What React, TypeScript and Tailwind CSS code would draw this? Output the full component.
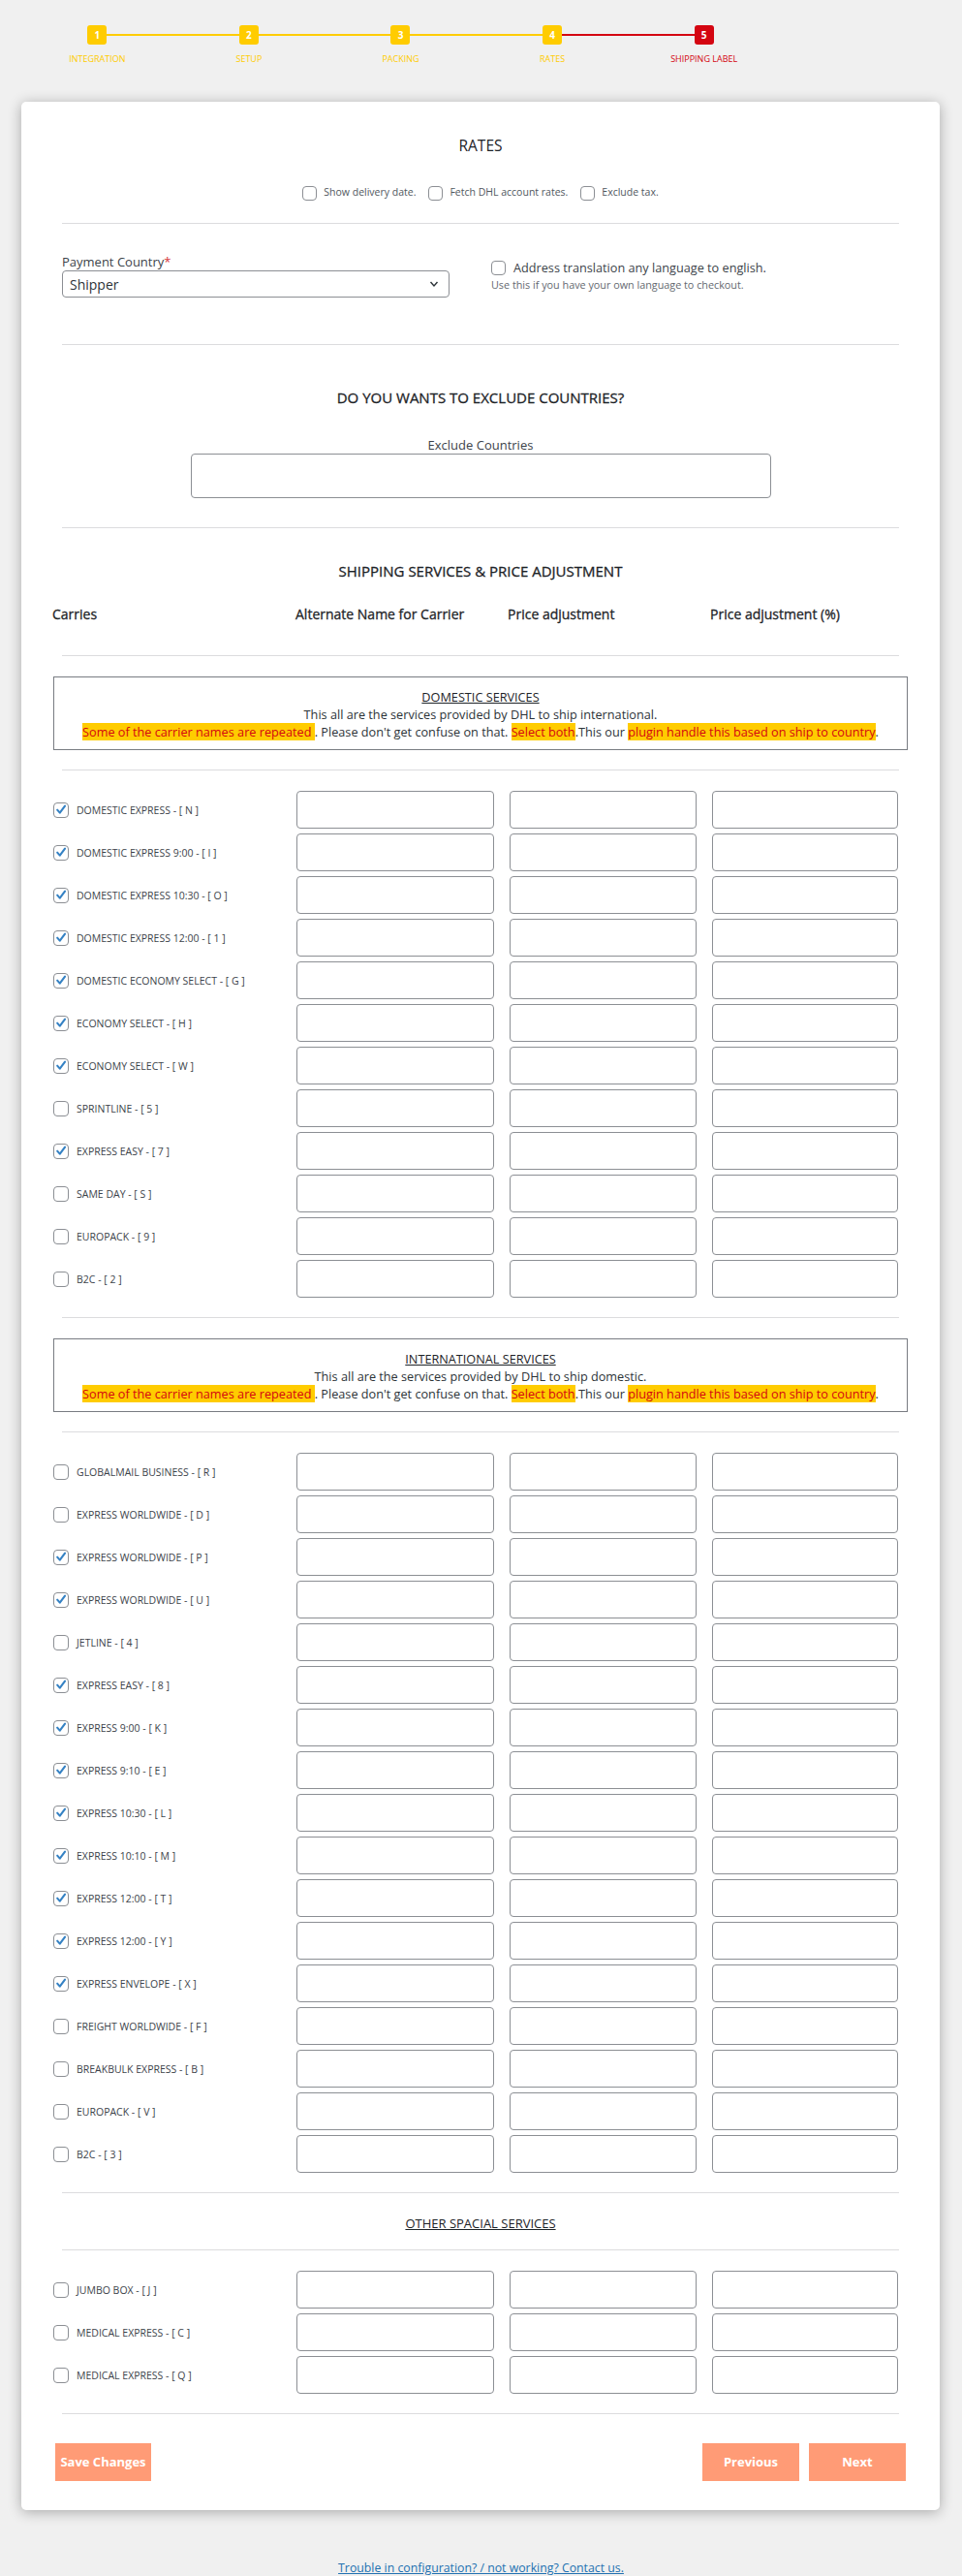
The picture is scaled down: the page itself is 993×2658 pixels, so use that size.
import React from "react";

const FONT = "font-['Open_Sans','Noto_Sans',sans-serif]";

function Box({ checked, size = 16 }: { checked?: boolean; size?: number }) {
  return (
    <span
      className={
        "relative inline-flex shrink-0 items-center justify-center rounded-[4px] border border-[#8c8f94] bg-white " +
        (size === 16 ? "h-[16px] w-[16px]" : "h-[15px] w-[15px]")
      }
    >
      {checked && (
        <svg viewBox="0 0 16 16" className="h-[15px] w-[15px]">
          <path
            d="M3.6 8.2 L6.6 11.6 L12.6 3.6"
            fill="none"
            stroke="#3582c4"
            strokeWidth="2.4"
            strokeLinecap="round"
            strokeLinejoin="round"
          />
        </svg>
      )}
    </span>
  );
}

const GRID = "grid grid-cols-[235px_204px_193px_192px] gap-x-4";

function Row({ label, checked }: { label: string; checked?: boolean }) {
  return (
    <div className={GRID + " h-[39px] items-center"}>
      <div className="flex items-center">
        <Box checked={checked} />
        <span className="ml-2 whitespace-nowrap text-[10.5px] leading-[16px] text-[#3c434a]">{label}</span>
      </div>
      <input type="text" className="h-[39px] w-full rounded-[4px] border border-[#8c8f94] bg-white" />
      <input type="text" className="h-[39px] w-full rounded-[4px] border border-[#8c8f94] bg-white" />
      <input type="text" className="h-[39px] w-full rounded-[4px] border border-[#8c8f94] bg-white" />
    </div>
  );
}

function Rows({ items }: { items: [string, boolean][] }) {
  return (
    <div className="flex flex-col gap-[5px]">
      {items.map(([l, c], i) => (
        <Row key={i} label={l} checked={c} />
      ))}
    </div>
  );
}

function Hr({ className = "" }: { className?: string }) {
  return <div className={"mx-[9px] border-t border-[#dcdcde] " + className} />;
}

function InfoBox({ title, line }: { title: string; line: string }) {
  const hl = "bg-[#ffcc00] text-[#d40511]";
  return (
    <div className="border border-[#787c82] pb-[9px] pt-[11px] text-center text-[12.7px] leading-[18px] text-[#3c434a]">
      <div>
        <span className="text-[#1d2327] underline">{title}</span>
      </div>
      <div className="text-[#2c3338]">{line}</div>
      <div className="whitespace-nowrap text-[#2c3338]">
        <span className={hl}>Some of the carrier names are repeated </span>. Please don't get confuse on that.{" "}
        <span className={hl}>Select both</span>.This our{" "}
        <span className={hl}>plugin handle this based on ship to country</span>.
      </div>
    </div>
  );
}

const domestic: [string, boolean][] = [
  ["DOMESTIC EXPRESS - [ N ]", true],
  ["DOMESTIC EXPRESS 9:00 - [ I ]", true],
  ["DOMESTIC EXPRESS 10:30 - [ O ]", true],
  ["DOMESTIC EXPRESS 12:00 - [ 1 ]", true],
  ["DOMESTIC ECONOMY SELECT - [ G ]", true],
  ["ECONOMY SELECT - [ H ]", true],
  ["ECONOMY SELECT - [ W ]", true],
  ["SPRINTLINE - [ 5 ]", false],
  ["EXPRESS EASY - [ 7 ]", true],
  ["SAME DAY - [ S ]", false],
  ["EUROPACK - [ 9 ]", false],
  ["B2C - [ 2 ]", false],
];

const international: [string, boolean][] = [
  ["GLOBALMAIL BUSINESS - [ R ]", false],
  ["EXPRESS WORLDWIDE - [ D ]", false],
  ["EXPRESS WORLDWIDE - [ P ]", true],
  ["EXPRESS WORLDWIDE - [ U ]", true],
  ["JETLINE - [ 4 ]", false],
  ["EXPRESS EASY - [ 8 ]", true],
  ["EXPRESS 9:00 - [ K ]", true],
  ["EXPRESS 9:10 - [ E ]", true],
  ["EXPRESS 10:30 - [ L ]", true],
  ["EXPRESS 10:10 - [ M ]", true],
  ["EXPRESS 12:00 - [ T ]", true],
  ["EXPRESS 12:00 - [ Y ]", true],
  ["EXPRESS ENVELOPE - [ X ]", true],
  ["FREIGHT WORLDWIDE - [ F ]", false],
  ["BREAKBULK EXPRESS - [ B ]", false],
  ["EUROPACK - [ V ]", false],
  ["B2C - [ 3 ]", false],
];

const other: [string, boolean][] = [
  ["JUMBO BOX - [ J ]", false],
  ["MEDICAL EXPRESS - [ C ]", false],
  ["MEDICAL EXPRESS - [ Q ]", false],
];

const steps = ["INTEGRATION", "SETUP", "PACKING", "RATES", "SHIPPING LABEL"];

function Stepper() {
  return (
    <div className="ml-[22px] grid w-[783px] grid-cols-5 pt-[26px]">
      {steps.map((s, i) => {
        const last = i === 4;
        return (
          <div key={s} className="relative flex flex-col items-center">
            {i < 4 && (
              <div
                className={
                  "absolute left-1/2 top-[9px] h-[2px] w-full " + (i === 3 ? "bg-[#d40511]" : "bg-[#ffcc00]")
                }
              />
            )}
            <div
              className={
                "relative z-10 flex h-5 w-5 items-center justify-center rounded-[3px] text-[10px] font-bold leading-none text-white " +
                (last ? "bg-[#d40511]" : "bg-[#ffcc00]")
              }
            >
              {i + 1}
            </div>
            <div
              className={
                "mt-[9px] whitespace-nowrap text-[9px] leading-[12px] " + (last ? "text-[#d40511]" : "text-[#ffcc00]")
              }
            >
              {s}
            </div>
          </div>
        );
      })}
    </div>
  );
}

const H = "text-center text-[15px] leading-[22px] text-[#1d2327] [-webkit-text-stroke:0.3px_#1d2327]";

export default function App() {
  return (
    <div className={FONT + " min-h-[2658px] w-full bg-[#f0f0f0] pb-[1px]"}>
      <Stepper />
      <div className="ml-[22px] mt-[38px] w-[948px] rounded-[5px] bg-white px-[33px] pb-[30px] pt-[34px] shadow-[0_2px_14px_rgba(0,0,0,0.3)]">
        <div className="text-center text-[15.5px] leading-[22px] text-[#1d2327]">RATES</div>
        <div className="mt-[30px] flex h-[16px] items-center justify-center text-[10.5px] text-[#50575e]">
          <label className="flex items-center">
            <Box size={15} />
            <span className="ml-[7px]">Show delivery date.</span>
          </label>
          <label className="ml-[13px] flex items-center">
            <Box size={15} />
            <span className="ml-[7px]">Fetch DHL account rates.</span>
          </label>
          <label className="ml-[13px] flex items-center">
            <Box size={15} />
            <span className="ml-[7px]">Exclude tax.</span>
          </label>
        </div>
        <Hr className="mt-[23px]" />

        <div className="mx-[9px] mt-[30px] flex">
          <div className="w-[400px]">
            <div className="h-[18px] text-[13px] leading-[18px] text-[#3c434a]">
              Payment Country<span className="text-[#d63638]">*</span>
            </div>
            <div className="flex h-[28px] items-center justify-between rounded-[4px] border border-[#8c8f94] bg-white pl-[7px] pr-[10px] text-[14px] text-[#2c3338]">
              <span>Shipper</span>
              <svg viewBox="0 0 10 10" className="h-[10px] w-[10px]">
                <path d="M1.5 3 L5 7 L8.5 3" fill="none" stroke="#2c3338" strokeWidth="1.4" />
              </svg>
            </div>
          </div>
          <div className="ml-[43px] pt-[6px]">
            <label className="flex items-center">
              <Box size={15} />
              <span className="ml-[8px] text-[12.7px] leading-[18px] text-[#3c434a]">
                Address translation any language to english.
              </span>
            </label>
            <div className="mt-[1px] text-[10.8px] leading-[16px] text-[#646970]">
              Use this if you have your own language to checkout.
            </div>
          </div>
        </div>
        <Hr className="mt-[48px]" />

        <div className={H + " mt-[43px]"}>DO YOU WANTS TO EXCLUDE COUNTRIES?</div>
        <div className="mt-[29px] h-[18px] text-center text-[13px] leading-[18px] text-[#3c434a]">Exclude Countries</div>
        <div className="mx-auto h-[46px] w-[599px] rounded-[4px] border border-[#8c8f94] bg-white" />
        <Hr className="mt-[30px]" />

        <div className={H + " mt-[33px]"}>SHIPPING SERVICES &amp; PRICE ADJUSTMENT</div>
        <div
          className={
            GRID +
            " mt-[24px] h-[20px] text-[14px] leading-[20px] text-[#1d2327] [-webkit-text-stroke:0.3px_#1d2327]"
          }
        >
          <div className="-ml-px">Carries</div>
          <div className="-ml-px">Alternate Name for Carrier</div>
          <div className="-ml-[2px]">Price adjustment</div>
          <div className="-ml-[2px]">Price adjustment (%)</div>
        </div>
        <Hr className="mt-[32px]" />
        <div className="mt-[21px]">
          <InfoBox title="DOMESTIC SERVICES" line="This all are the services provided by DHL to ship international." />
        </div>
        <Hr className="mt-[20px]" />
        <div className="mt-[21px]">
          <Rows items={domestic} />
        </div>
        <Hr className="mt-[20px]" />
        <div className="mt-[21px]">
          <InfoBox title="INTERNATIONAL SERVICES" line="This all are the services provided by DHL to ship domestic." />
        </div>
        <Hr className="mt-[20px]" />
        <div className="mt-[21px]">
          <Rows items={international} />
        </div>
        <Hr className="mt-[20px]" />
        <div className="mt-[22px] h-[18px] text-center text-[13px] leading-[18px] text-[#1d2327]">
          <span className="underline">OTHER SPACIAL SERVICES</span>
        </div>
        <Hr className="mt-[18px]" />
        <div className="mt-[21px]">
          <Rows items={other} />
        </div>
        <Hr className="mt-[20px]" />

        <div className="mt-[30px] flex items-center justify-between px-[2px]">
          <button className="flex h-[39px] w-[99px] items-center justify-center whitespace-nowrap bg-[#ff9b76] text-[13px] font-bold text-white">
            Save Changes
          </button>
          <div className="flex gap-[10px]">
            <button className="flex h-[39px] w-[100px] items-center justify-center bg-[#ff9b76] text-[13px] font-bold text-white">
              Previous
            </button>
            <button className="flex h-[39px] w-[100px] items-center justify-center bg-[#ff9b76] text-[13px] font-bold text-white">
              Next
            </button>
          </div>
        </div>
      </div>
      <div className="mt-[51px] text-center text-[12.3px] leading-[18px]">
        <a className="text-[#2271b1] underline">Trouble in configuration? / not working? Contact us.</a>
      </div>
    </div>
  );
}
